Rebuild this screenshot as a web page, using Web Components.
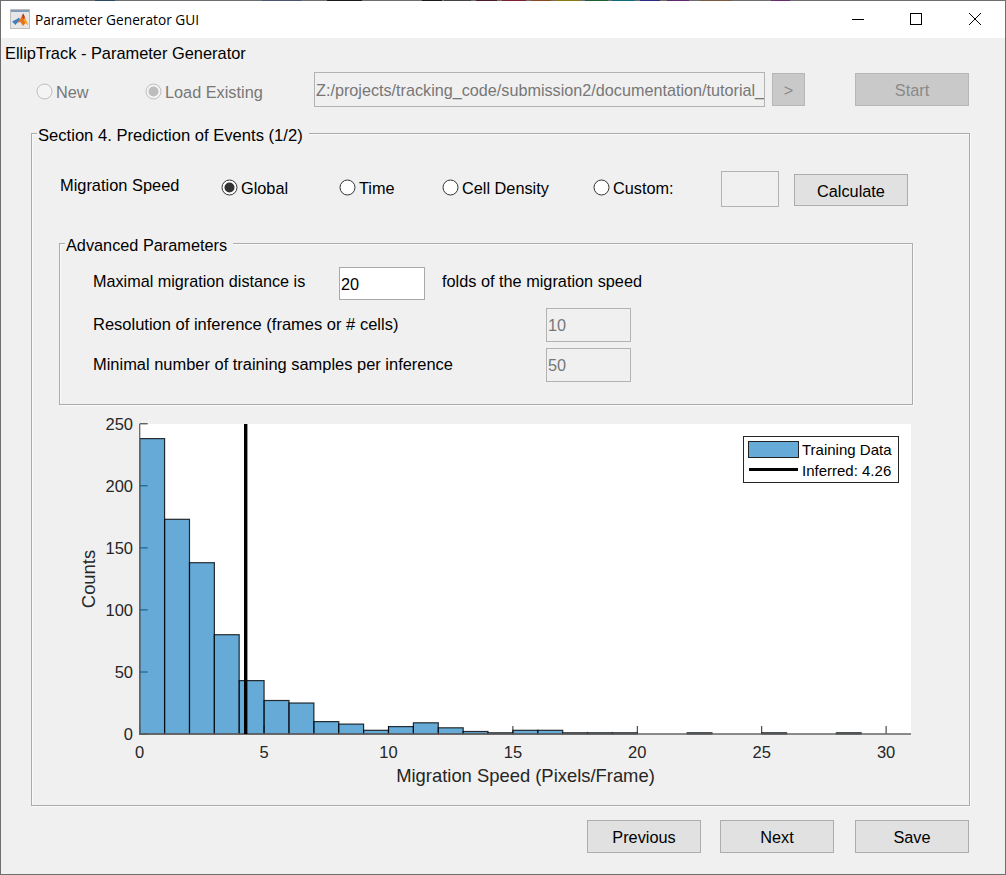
<!DOCTYPE html>
<html lang="en">
<head>
<meta charset="utf-8">
<title>Parameter Generator GUI</title>
<style>
    html, body { margin: 0; padding: 0; background: #f0f0f0; overflow: hidden; }
    body { font-family: "Liberation Sans", Arial, sans-serif; font-size: 16.3px; color: #000; }
</style>
</head>
<body>
<app-window>
    <title-bar slot="title">Parameter Generator GUI</title-bar>

    <div class="heading" slot="heading">EllipTrack - Parameter Generator</div>

    <source-row slot="source"></source-row>

    <group-box slot="section" label="Section 4. Prediction of Events (1/2)" kind="section">
        <speed-row></speed-row>
        <advanced-params></advanced-params>
        <speed-histogram></speed-histogram>
    </group-box>

    <ui-button slot="footer">Previous</ui-button>
    <ui-button slot="footer" style="margin: 0 21px 0 19px">Next</ui-button>
    <ui-button slot="footer">Save</ui-button>
</app-window>

<script>
// small helper, every element just sets its shadow html once
class Base extends HTMLElement {
    constructor() {
        super();
        this.attachShadow({ mode: 'open' }).innerHTML = this.render();
    }
    render() { return ''; }
}

// bits of the desktop behind the window that show through the top edge
const EDGE = [[95, 115, '#2a4a66'], [262, 301, '#4a5470'], [327, 362, '#1a1a1a'], [422, 442, '#1a1a1a'], [444, 471, '#444'],
    [476, 497, '#4a1a2a'], [502, 526, '#7a2030'], [531, 551, '#8a4a20'], [556, 580, '#8a7a10'], [585, 608, '#1a6030'],
    [612, 635, '#106a80'], [640, 660, '#2a2a80'], [667, 689, '#602a70'], [700, 732, '#7a5a40'], [771, 790, '#6a2a70']];

class AppWindow extends Base {
    render() {
        const edge = EDGE.map(([a, b, c]) => `#6e6e6e ${a}px, ${c} ${a}px, ${c} ${b}px, #6e6e6e ${b}px`).join(', ');
        return `
            <style>
                :host {
                    display: flex;
                    flex-direction: column;
                    box-sizing: border-box;
                    width: 1006px;
                    height: 875px;
                    border: 1px solid #6e6e6e;
                    border-top: 0;
                    background: #f0f0f0;
                }
                .edge { height: 1px; margin: 0 -1px; background: linear-gradient(to right, ${edge}); }
                .heading { padding: 5px 0 0 4px; height: 20px; }
                ::slotted(.heading) { font-size: 16.4px; line-height: 20px; }
                .source { margin-top: 9px; }
                .section { margin: 26px 0 0 30px; }
                .footer {
                    display: flex;
                    justify-content: flex-end;
                    margin-top: 14px;
                    padding-right: 36px;
                }
            </style>
            <div class="edge"></div>
            <slot name="title"></slot>
            <div class="heading"><slot name="heading"></slot></div>
            <div class="source"><slot name="source"></slot></div>
            <div class="section"><slot name="section"></slot></div>
            <div class="footer"><slot name="footer"></slot></div>
        `;
    }
}

class TitleBar extends Base {
    render() {
        return `
            <style>
                :host {
                    display: flex;
                    align-items: center;
                    height: 37px;
                    background: #fff;
                    font-family: "Open Sans", "Noto Sans", sans-serif;
                    color: #000;
                }
                .logo { width: 20px; height: 20px; margin: -1px 5px 0 9px; flex: none; }
                .name { flex: 1; font-size: 13.7px; margin-top: -1px; }
                .ctl { width: 58px; height: 37px; display: flex; align-items: center; justify-content: center; flex: none; }
                .ctl svg { width: 14px; height: 14px; margin-top: -1px; }
                .max, .close { margin-right: 1px; }
            </style>
            <svg class="logo" viewBox="0 0 20 20">
                <rect x="0.5" y="0.5" width="19" height="19" fill="#e6e6e6" stroke="#bdbdbd"/>
                <rect x="1" y="1" width="18" height="2" fill="#7f9db8"/>
                <path d="M2 12.5 L7 10 L9 8.5 L10 10.5 L7 14 L5.5 16 Z" fill="#3f7fbf"/>
                <path d="M7 14 L10 10.5 L12 6.5 L13.5 4.5 L15 9 L18 16 L15.5 14 L13 17 L10.5 13 L8.5 13.5 Z" fill="#e8711f"/>
                <path d="M12 6.5 L13.5 4.5 L15 9 L13.5 10.5 Z" fill="#c0392b"/>
                <path d="M13.5 10.5 L15 9 L18 16 L15.5 14 Z" fill="#f2b01e"/>
            </svg>
            <div class="name"><slot></slot></div>
            <div class="ctl"><svg viewBox="0 0 14 14"><path d="M1 7.5H13" stroke="#000" fill="none"/></svg></div>
            <div class="ctl max"><svg viewBox="0 0 14 14"><rect x="1.5" y="1.5" width="11" height="11" stroke="#000" fill="none"/></svg></div>
            <div class="ctl close"><svg viewBox="0 0 14 14"><path d="M1 1L13 13M13 1L1 13" stroke="#000" fill="none"/></svg></div>
        `;
    }
}

class UiButton extends Base {
    render() {
        return `
            <style>
                :host {
                    display: inline-flex;
                    align-items: center;
                    justify-content: center;
                    box-sizing: border-box;
                    width: var(--w, 114px);
                    height: var(--h, 33px);
                    padding-top: 2px;
                    flex: none;
                    background: #e1e1e1;
                    border: 1px solid #adadad;
                    font-size: 16.3px;
                    color: #000;
                }
                :host([disabled]) {
                    background: #c9c9c9;
                    border-color: #b7b7b7;
                    color: #8a8a8a;
                }
            </style>
            <slot></slot>
        `;
    }
}

class RadioOption extends Base {
    render() {
        const on = this.hasAttribute('checked');
        const off = this.hasAttribute('disabled');
        const line = off ? '#bcbcbc' : '#333';
        const dot = off ? '#bdbdbd' : '#333';
        return `
            <style>
                :host {
                    display: inline-flex;
                    align-items: center;
                    gap: 3px;
                    font-size: 16.3px;
                    color: ${off ? '#777' : '#000'};
                }
                svg { width: 17px; height: 17px; flex: none; }
                .t { margin-top: 2px; }
            </style>
            <svg viewBox="0 0 17 17">
                <circle cx="8.5" cy="8.5" r="7.5" fill="${off ? '#f4f4f4' : '#fff'}" stroke="${line}"/>
                ${on ? `<circle cx="8.5" cy="8.5" r="5" fill="${dot}"/>` : ''}
            </svg>
            <span class="t"><slot></slot></span>
        `;
    }
}

class TextField extends Base {
    render() {
        return `
            <style>
                :host {
                    display: block;
                    box-sizing: border-box;
                    width: var(--w, 85px);
                    height: var(--h, 34px);
                    flex: none;
                    border: 1px solid #b3b3b3;
                    background: #f0f0f0;
                    font-size: var(--fs, 16.3px);
                    line-height: var(--lh, 33px);
                    padding-left: 1px;
                    color: #777;
                    overflow: hidden;
                    white-space: nowrap;
                }
                :host([active]) { background: #fff; color: #000; border-color: #a9a9a9; }
            </style>
            <slot></slot>
        `;
    }
}

class GroupBox extends Base {
    render() {
        return `
            <style>
                :host {
                    display: block;
                    box-sizing: border-box;
                    position: relative;
                    border: 1px solid #ababab;
                    box-shadow: inset 1px 1px 0 #fafafa, 1px 1px 0 #fafafa;
                }
                :host([kind="section"]) { width: 939px; height: 673px; padding: 37px 0 0 28px; }
                :host([kind="inner"]) { width: 854px; height: 162px; margin-left: -1px; padding: 23px 0 0 33px; }
                .label {
                    position: absolute;
                    top: -7px;
                    left: 5px;
                    padding: 0 6px 0 1px;
                    background: #f0f0f0;
                    font-size: 16.6px;
                    line-height: 18px;
                    white-space: nowrap;
                }
                :host([kind="inner"]) .label { left: 5px; top: -8px; font-size: 16.3px; }
            </style>
            <div class="label">${this.getAttribute('label')}</div>
            <slot></slot>
        `;
    }
}

class SourceRow extends Base {
    render() {
        return `
            <style>
                :host { display: flex; align-items: center; height: 35px; }
                radio-option { margin-top: 4px; }
                .new { margin-left: 35px; width: 109px; }
                .load { width: 169px; }
                .path { --w: 451px; --h: 35px; --lh: 34px; --fs: 16.2px; }
                .go { --w: 33px; margin-left: 7px; }
                .start { margin-left: 50px; }
            </style>
            <radio-option class="new" disabled>New</radio-option>
            <radio-option class="load" disabled checked>Load Existing</radio-option>
            <text-field class="path">Z:/projects/tracking_code/submission2/documentation/tutorial_</text-field>
            <ui-button class="go" disabled>&gt;</ui-button>
            <ui-button class="start" disabled>Start</ui-button>
        `;
    }
}

class SpeedRow extends Base {
    render() {
        return `
            <style>
                :host {
                    display: grid;
                    grid-template-columns: 161px 118px 103px 151px 128px 58px 114px;
                    align-items: center;
                    height: 36px;
                    font-size: 16.4px;
                }
                .title { margin-top: -8px; }
                radio-option { margin-top: -3px; }
                .custom { --w: 58px; --h: 36px; }
                .calc { margin-left: 15px; margin-top: 2px; --h: 32px; }
            </style>
            <div class="title">Migration Speed</div>
            <radio-option checked>Global</radio-option>
            <radio-option>Time</radio-option>
            <radio-option>Cell Density</radio-option>
            <radio-option>Custom:</radio-option>
            <text-field class="custom"></text-field>
            <ui-button class="calc">Calculate</ui-button>
        `;
    }
}

class AdvancedParams extends Base {
    render() {
        return `
            <style>
                :host { display: block; margin-top: 36px; font-size: 16.3px; }
                .row { display: flex; align-items: center; }
                .r1 { height: 33px; }
                .r1 .txt { width: 246px; margin-top: -5px; font-size: 16.2px; }
                .r1 .tail { margin-left: 17px; margin-top: -5px; }
                .r1 text-field { --w: 86px; --h: 33px; }
                .r2 { height: 34px; margin-top: 8px; }
                .r3 { height: 34px; margin-top: 6px; }
                .r2 .txt, .r3 .txt { width: 453px; margin-top: -1px; }
                .r2 .txt { font-size: 16.5px; }
                .r3 .txt { font-size: 16.45px; }
            </style>
            <group-box kind="inner" label="Advanced Parameters">
                <div class="row r1">
                    <span class="txt">Maximal migration distance is</span>
                    <text-field active>20</text-field>
                    <span class="tail">folds of the migration speed</span>
                </div>
                <div class="row r2">
                    <span class="txt">Resolution of inference (frames or # cells)</span>
                    <text-field>10</text-field>
                </div>
                <div class="row r3">
                    <span class="txt">Minimal number of training samples per inference</span>
                    <text-field>50</text-field>
                </div>
            </group-box>
        `;
    }
}

// histogram bin counts read off the screenshot, bin width 1
const COUNTS = [238, 173, 138, 80, 43, 27, 25, 10, 8, 3, 6, 9, 5, 2, 1, 3, 3, 1, 1, 1, 0, 0, 1, 0, 0, 1, 0, 0, 1, 0];

class SpeedHistogram extends Base {
    render() {
        const x0 = 139.7, y0 = 734, sx = 24.88, sy = 1.241, right = 911;
        const X = v => x0 + v * sx;
        const Y = v => y0 - v * sy;

        let ticks = '', labels = '', bars = '';
        for (let v = 0; v <= 30; v += 5) {
            ticks += `<path d="M${X(v).toFixed(1)} ${y0}v-8"/>`;
            labels += `<text x="${X(v).toFixed(1)}" y="758" text-anchor="middle">${v}</text>`;
        }
        for (let v = 0; v <= 250; v += 50) {
            ticks += `<path d="M${x0} ${Y(v).toFixed(1)}h8"/>`;
            labels += `<text x="133" y="${(Y(v) + 6).toFixed(1)}" text-anchor="end">${v}</text>`;
        }
        COUNTS.forEach((c, i) => {
            if (!c) return;
            bars += `<rect x="${X(i).toFixed(1)}" y="${Y(c).toFixed(1)}" width="${sx}" height="${(c * sy).toFixed(1)}"/>`;
        });

        return `
            <style>
                :host { display: block; width: 853px; height: 380px; margin-top: 5px; }
                svg { display: block; }
                text { font-family: "Liberation Sans", Arial, sans-serif; font-size: 16.5px; fill: #262626; }
                .ticks path { stroke: #262626; stroke-width: 1; fill: none; }
                .bars rect { fill: #0072bd; fill-opacity: .6; stroke: #000; stroke-opacity: .8; stroke-width: 1.2; }
                .legend text { font-size: 15px; fill: #000; }
            </style>
            <svg width="853" height="380" viewBox="60 410 853 380">
                <rect x="139" y="424" width="${right - 139}" height="310" fill="#fff"/>
                <g class="ticks">${ticks}</g>
                <g class="bars">${bars}</g>
                <path d="M${x0} 424V${y0}H${right}" fill="none" stroke="#666" stroke-width="1.3"/>
                <path d="M${X(4.26).toFixed(1)} 424V${y0}" stroke="#000" stroke-width="3.4"/>
                <g>${labels}</g>
                <text x="525.5" y="782" text-anchor="middle" style="font-size:18.4px">Migration Speed (Pixels/Frame)</text>
                <text transform="translate(95 579) rotate(-90)" text-anchor="middle" style="font-size:18.4px">Counts</text>
                <g class="legend">
                    <rect x="743.5" y="436.5" width="155" height="46" fill="#fff" stroke="#262626"/>
                    <rect x="748.5" y="441.5" width="50" height="16" fill="#66aad7" stroke="#222"/>
                    <path d="M749 469.5H798" stroke="#000" stroke-width="3"/>
                    <text x="802" y="454.5">Training Data</text>
                    <text x="802" y="476">Inferred: 4.26</text>
                </g>
            </svg>
        `;
    }
}

customElements.define('app-window', AppWindow);
customElements.define('title-bar', TitleBar);
customElements.define('ui-button', UiButton);
customElements.define('radio-option', RadioOption);
customElements.define('text-field', TextField);
customElements.define('group-box', GroupBox);
customElements.define('source-row', SourceRow);
customElements.define('speed-row', SpeedRow);
customElements.define('advanced-params', AdvancedParams);
customElements.define('speed-histogram', SpeedHistogram);
</script>
</body>
</html>
